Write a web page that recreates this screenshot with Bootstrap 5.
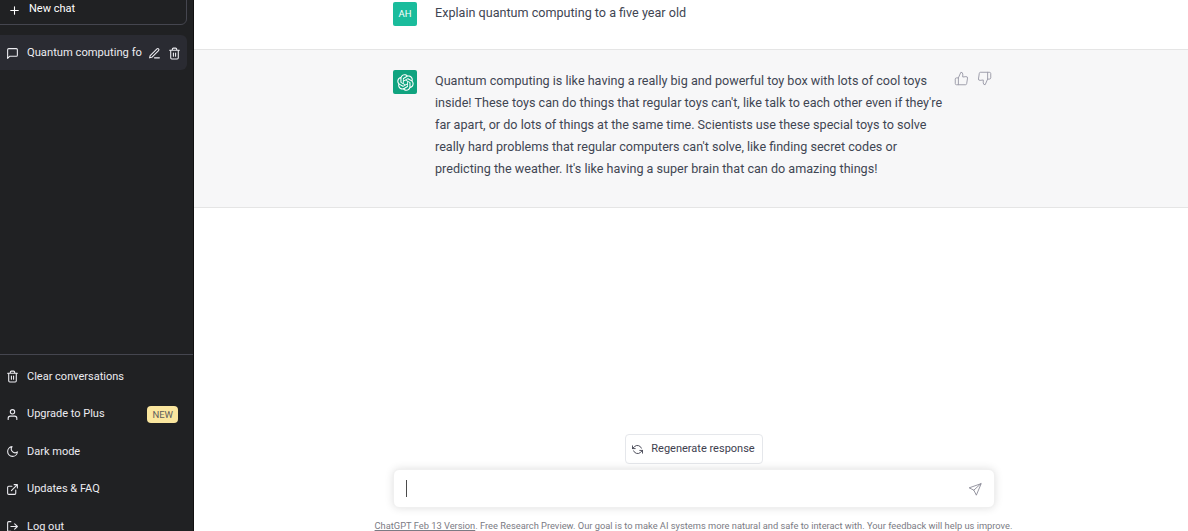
<!DOCTYPE html>
<html lang="en">
<head>
<meta charset="utf-8">
<title>Quantum computing</title>
<link href="https://cdn.jsdelivr.net/npm/bootstrap@5.3.0/dist/css/bootstrap.min.css" rel="stylesheet">
<style>
html,body{height:531px;overflow:hidden;background:#fff}
body{font-family:Roboto,"Noto Sans",sans-serif;font-size:12.6px;color:#3f4653}
.app-shell{height:569px;margin-top:-24px}
.side-bar{width:194px;background:#202123;border-right:1px solid #111;color:#ececf1;flex:none}
.new-chat{height:49px;margin:0 6px 0 -20px;padding:0 0 7px 27px;border:1px solid #45464f;border-radius:6px;color:#fff;font-size:11px}
.chat-item{height:35px;margin:10px 6px 0 0;background:#2a2b32;border-radius:0 6px 6px 0;padding:2px 6.5px 0 6px;color:#ececf1;font-size:11.2px}
.chat-title{width:115px;white-space:nowrap;margin-left:8px}
.act-ico{margin-left:6.5px}
.side-foot{border-top:1px solid #45464f;padding-top:3px}
.foot-item{height:37.5px;padding:1px 15px 0 6px;color:#ececf1;font-size:11px;gap:8px}
.side-ico{width:13px;height:13px;flex:none;stroke:currentColor;fill:none;stroke-width:2;stroke-linecap:round;stroke-linejoin:round}
.new-tag{background:#fae69e;color:#5d5d5d;font-size:9.5px;line-height:1;padding:3.5px 5px;border-radius:4px}
.msg-user{height:74px;border-bottom:1px solid #e5e5e5;padding-top:26px;padding-left:199px}
.msg-bot{height:158px;background:#f7f7f8;border-bottom:1px solid #e5e5e5;padding-top:20px;padding-left:199px}
.ava{width:24px;height:24px;border-radius:2px;color:#fff;font-size:9.5px;flex:none}
.ava-user{background:#1abc9c}
.ava-bot{background:#10a37f}
.msg-text{width:510px;margin:0 0 0 18px;line-height:22px}
.thumbs{gap:8px;margin-left:9px;color:#9a9aa8;padding-top:1px}
.thumb-ico{width:15px;height:15px;stroke:currentColor;fill:none;stroke-width:1.5;stroke-linecap:round;stroke-linejoin:round}
.bottom-dock{padding-left:5px}
.regen{height:30px;width:138px;border:1px solid #e5e7eb;border-radius:4px;background:#fff;color:#40414f;font-size:11px;gap:8px;padding:0}
.regen-ico{width:11px;height:11px}
.prompt{width:602px;height:39px;margin-top:5px;border-radius:6px;background:#fff;box-shadow:0 0 8px rgba(0,0,0,.13);border:1px solid #f0f0f0;padding:0 12px}
.caret-bar{width:1.5px;height:17px;background:#4b4b4b}
.send-ico{color:#777785;stroke-width:1.3;width:14px;height:14px}
.fine-print{font-size:9.3px;color:#7b7b84;margin-top:11px;white-space:nowrap}
.fine-print a{color:#7b7b84}
.dock-gap{height:12px}
</style>
</head>
<body>
<div class="app-shell d-flex">
  <aside class="side-bar d-flex flex-column">
    <div class="new-chat d-flex align-items-end gap-2">
      <svg class="side-ico" viewBox="0 0 24 24"><path d="M12 5v14M5 12h14"/></svg><span>New chat</span>
    </div>
    <div class="chat-item d-flex align-items-center">
      <svg class="side-ico" viewBox="0 0 24 24"><path d="M21 15a2 2 0 0 1-2 2H7l-4 4V5a2 2 0 0 1 2-2h14a2 2 0 0 1 2 2z"/></svg>
      <span class="chat-title">Quantum computing fo</span>
      <svg class="side-ico act-ico" viewBox="0 0 24 24"><path d="M12 20h9"/><path d="M16.5 3.5a2.12 2.12 0 0 1 3 3L7 19l-4 1 1-4z"/></svg>
      <svg class="side-ico act-ico" viewBox="0 0 24 24"><path d="M3 6h18M19 6v14a2 2 0 0 1-2 2H7a2 2 0 0 1-2-2V6m3 0V4a2 2 0 0 1 2-2h4a2 2 0 0 1 2 2v2M10 11v6M14 11v6"/></svg>
    </div>
    <div class="flex-grow-1"></div>
    <div class="side-foot">
      <div class="foot-item d-flex align-items-center"><svg class="side-ico" viewBox="0 0 24 24"><path d="M3 6h18M19 6v14a2 2 0 0 1-2 2H7a2 2 0 0 1-2-2V6m3 0V4a2 2 0 0 1 2-2h4a2 2 0 0 1 2 2v2M10 11v6M14 11v6"/></svg><span>Clear conversations</span></div>
      <div class="foot-item d-flex align-items-center"><svg class="side-ico" viewBox="0 0 24 24"><path d="M20 21v-2a4 4 0 0 0-4-4H8a4 4 0 0 0-4 4v2"/><circle cx="12" cy="7" r="4"/></svg><span class="flex-grow-1">Upgrade to Plus</span><span class="new-tag">NEW</span></div>
      <div class="foot-item d-flex align-items-center"><svg class="side-ico" viewBox="0 0 24 24"><path d="M21 12.79A9 9 0 1 1 11.21 3 7 7 0 0 0 21 12.79z"/></svg><span>Dark mode</span></div>
      <div class="foot-item d-flex align-items-center"><svg class="side-ico" viewBox="0 0 24 24"><path d="M18 13v6a2 2 0 0 1-2 2H5a2 2 0 0 1-2-2V8a2 2 0 0 1 2-2h6M15 3h6v6M10 14 21 3"/></svg><span>Updates &amp; FAQ</span></div>
      <div class="foot-item d-flex align-items-center"><svg class="side-ico" viewBox="0 0 24 24"><path d="M9 21H5a2 2 0 0 1-2-2V5a2 2 0 0 1 2-2h4M16 17l5-5-5-5M21 12H9"/></svg><span>Log out</span></div>
    </div>
  </aside>
  <main class="flex-grow-1 d-flex flex-column">
    <div class="msg-user d-flex">
      <div class="ava ava-user d-flex align-items-center justify-content-center">AH</div>
      <div class="msg-text">Explain quantum computing to a five year old</div>
    </div>
    <div class="msg-bot d-flex">
      <div class="ava ava-bot d-flex align-items-center justify-content-center">
        <svg width="17" height="17" viewBox="0 0 41 41" fill="#fff"><path d="M37.5324 16.8707C37.9808 15.5241 38.1363 14.0974 37.9886 12.6859C37.8409 11.2744 37.3934 9.91076 36.676 8.68622C35.6126 6.83404 33.9882 5.3676 32.0373 4.4985C30.0864 3.62941 27.9098 3.40259 25.8215 3.85078C24.8796 2.7893 23.7219 1.94125 22.4257 1.36341C21.1295 0.785575 19.7249 0.491269 18.3058 0.500197C16.1708 0.495044 14.0893 1.16803 12.3614 2.42214C10.6335 3.67624 9.34853 5.44666 8.6917 7.47815C7.30085 7.76286 5.98686 8.3414 4.8377 9.17505C3.68854 10.0087 2.73073 11.0782 2.02839 12.312C0.956464 14.1591 0.498905 16.2988 0.721698 18.4228C0.944492 20.5467 1.83612 22.5449 3.268 24.1293C2.81966 25.4759 2.66413 26.9026 2.81182 28.3141C2.95951 29.7256 3.40701 31.0892 4.12437 32.3138C5.18791 34.1659 6.8123 35.6322 8.76321 36.5013C10.7141 37.3704 12.8907 37.5973 14.9789 37.1492C15.9208 38.2107 17.0786 39.0587 18.3747 39.6366C19.6709 40.2144 21.0755 40.5087 22.4946 40.4998C24.6307 40.5054 26.7133 39.8321 28.4418 38.5772C30.1704 37.3223 31.4556 35.5506 32.1119 33.5179C33.5027 33.2332 34.8167 32.6547 35.9659 31.821C37.115 30.9874 38.0728 29.9178 38.7752 28.684C39.8458 26.8371 40.3023 24.6979 40.0789 22.5748C39.8556 20.4517 38.9639 18.4544 37.5324 16.8707ZM22.4978 37.8849C20.7443 37.8874 19.0459 37.2733 17.6994 36.1501C17.7601 36.117 17.8666 36.0586 17.936 36.0161L25.9004 31.4156C26.1003 31.3019 26.2663 31.137 26.3813 30.9378C26.4964 30.7386 26.5563 30.5124 26.5549 30.2825V19.0542L29.9213 20.998C29.9389 21.0068 29.9541 21.0198 29.9656 21.0359C29.977 21.052 29.9842 21.0707 29.9867 21.0902V30.3889C29.9842 32.375 29.1946 34.2791 27.7909 35.6841C26.3872 37.0892 24.4838 37.8806 22.4978 37.8849ZM6.39227 31.0064C5.51397 29.4888 5.19742 27.7107 5.49804 25.9832C5.55718 26.0187 5.66048 26.0818 5.73461 26.1244L13.699 30.7248C13.8975 30.8408 14.1233 30.902 14.3532 30.902C14.583 30.902 14.8088 30.8408 15.0073 30.7248L24.731 25.1103V28.9979C24.7321 29.0177 24.7283 29.0376 24.7199 29.0556C24.7115 29.0736 24.6988 29.0893 24.6829 29.1012L16.6317 33.7497C14.9096 34.7416 12.8643 35.0097 10.9447 34.4954C9.02506 33.9811 7.38785 32.7263 6.39227 31.0064ZM4.29707 13.6194C5.17156 12.0998 6.55279 10.9364 8.19885 10.3327C8.19885 10.4013 8.19491 10.5228 8.19491 10.6071V19.808C8.19351 20.0378 8.25334 20.2638 8.36823 20.4629C8.48312 20.6619 8.64893 20.8267 8.84863 20.9404L18.5723 26.5542L15.206 28.4979C15.1894 28.5089 15.1703 28.5155 15.1505 28.5173C15.1307 28.5191 15.1107 28.516 15.0924 28.5082L7.04046 23.8557C5.32135 22.8601 4.06716 21.2235 3.55289 19.3046C3.03862 17.3858 3.30624 15.3413 4.29707 13.6194ZM31.955 20.0556L22.2312 14.4411L25.5976 12.4981C25.6142 12.4872 25.6333 12.4805 25.6531 12.4787C25.6729 12.4769 25.6928 12.4801 25.7111 12.4879L33.7631 17.1364C34.9967 17.849 36.0017 18.8982 36.6606 20.1613C37.3194 21.4244 37.6047 22.849 37.4832 24.2684C37.3617 25.6878 36.8382 27.0432 35.9743 28.1759C35.1103 29.3086 33.9415 30.1717 32.6047 30.6641C32.6047 30.5947 32.6047 30.4733 32.6047 30.3889V21.188C32.6066 20.9586 32.5474 20.7328 32.4332 20.5338C32.319 20.3348 32.154 20.1698 31.955 20.0556ZM35.3055 15.0128C35.2464 14.9765 35.1431 14.9142 35.069 14.8717L27.1045 10.2712C26.906 10.1554 26.6803 10.0943 26.4504 10.0943C26.2206 10.0943 25.9948 10.1554 25.7963 10.2712L16.0726 15.8858V11.9982C16.0715 11.9783 16.0753 11.9585 16.0837 11.9405C16.0921 11.9225 16.1048 11.9068 16.1207 11.8949L24.1719 7.25025C25.4053 6.53903 26.8158 6.19376 28.2383 6.25482C29.6608 6.31589 31.0364 6.78077 32.2044 7.59508C33.3723 8.40939 34.2842 9.53945 34.8334 10.8531C35.3826 12.1667 35.5464 13.6095 35.3055 15.0128ZM14.2424 21.9419L10.8752 19.9981C10.8576 19.9893 10.8423 19.9763 10.8309 19.9602C10.8195 19.9441 10.8122 19.9254 10.8098 19.9058V10.6071C10.8107 9.18295 11.2173 7.78848 11.9819 6.58696C12.7466 5.38544 13.8377 4.42659 15.1275 3.82264C16.4173 3.21869 17.8524 2.99464 19.2649 3.1767C20.6775 3.35876 22.0089 3.93941 23.1034 4.85067C23.0427 4.88379 22.937 4.94215 22.8668 4.98473L14.9024 9.58517C14.7025 9.69878 14.5366 9.86356 14.4215 10.0626C14.3065 10.2616 14.2466 10.4877 14.2479 10.7175L14.2424 21.9419ZM16.071 17.9991L20.4018 15.4978L24.7325 17.9975V22.9985L20.4018 25.4983L16.071 22.9985V17.9991Z"/></svg>
      </div>
      <div class="msg-text">Quantum computing is like having a really big and powerful toy box with lots of cool toys inside! These toys can do things that regular toys can't, like talk to each other even if they're far apart, or do lots of things at the same time. Scientists use these special toys to solve really hard problems that regular computers can't solve, like finding secret codes or predicting the weather. It's like having a super brain that can do amazing things!</div>
      <div class="thumbs d-flex align-items-start">
        <svg class="thumb-ico" viewBox="0 0 24 24"><path d="M14 9V5a3 3 0 0 0-3-3l-4 9v11h11.28a2 2 0 0 0 2-1.7l1.38-9a2 2 0 0 0-2-2.3zM7 22H4a2 2 0 0 1-2-2v-7a2 2 0 0 1 2-2h3"/></svg>
        <svg class="thumb-ico" viewBox="0 0 24 24"><path d="M10 15v4a3 3 0 0 0 3 3l4-9V2H5.72a2 2 0 0 0-2 1.7l-1.38 9a2 2 0 0 0 2 2.3zm7-13h2.67A2.31 2.31 0 0 1 22 4v7a2.31 2.31 0 0 1-2.33 2H17"/></svg>
      </div>
    </div>
    <div class="flex-grow-1"></div>
    <div class="bottom-dock d-flex flex-column align-items-center">
      <button class="regen btn d-flex align-items-center justify-content-center" type="button">
        <svg class="side-ico regen-ico" viewBox="0 0 24 24"><path d="M1 4v6h6M23 20v-6h-6"/><path d="M20.49 9A9 9 0 0 0 5.64 5.64L1 10m22 4-4.64 4.36A9 9 0 0 1 3.51 15"/></svg>
        <span>Regenerate response</span>
      </button>
      <div class="prompt d-flex align-items-center justify-content-between">
        <span class="caret-bar"></span>
        <svg class="thumb-ico send-ico" viewBox="0 0 24 24"><path d="M22 3 2 10l8 4 4 8zM10 14 22 3"/></svg>
      </div>
      <div class="fine-print"><a href="#">ChatGPT Feb 13 Version</a>. Free Research Preview. Our goal is to make AI systems more natural and safe to interact with. Your feedback will help us improve.</div>
    </div>
    <div class="dock-gap"></div>
  </main>
</div>
<script src="https://cdn.jsdelivr.net/npm/bootstrap@5.3.0/dist/js/bootstrap.bundle.min.js"></script>
</body>
</html>
